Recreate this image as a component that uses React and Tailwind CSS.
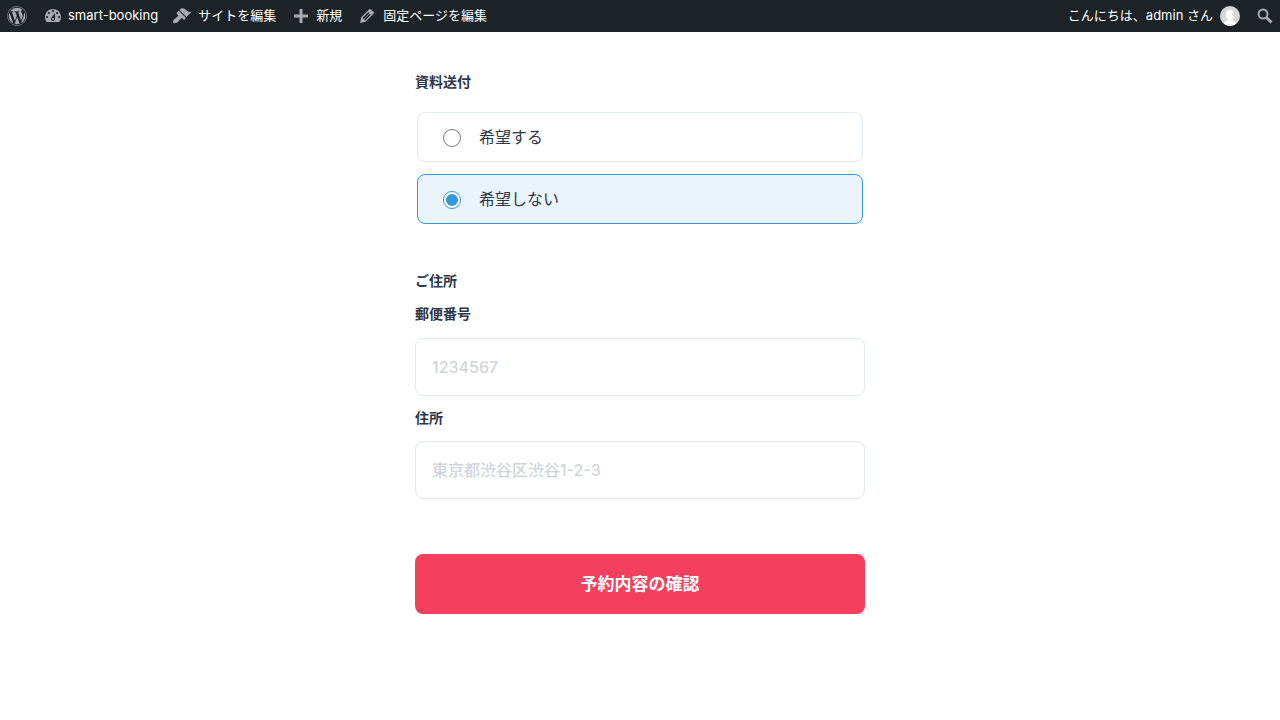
import React, { useState } from 'react';
import { FaWordpress } from 'react-icons/fa';

const jp = { fontFamily: 'Inter, "Noto Sans CJK JP", sans-serif' };

const DashboardIcon = () => (
  <svg viewBox="0 0 20 20" className="w-5 h-5 fill-[#a7aaad]">
    <path fillRule="evenodd" d="M3.76 16h12.48c1.1-1.37 1.76-3.11 1.76-5 0-4.42-3.58-8-8-8s-8 3.58-8 8c0 1.89.66 3.63 1.76 5zM10 4c.55 0 1 .45 1 1s-.45 1-1 1-1-.45-1-1 .45-1 1-1zM6 6c.55 0 1 .45 1 1s-.45 1-1 1-1-.45-1-1 .45-1 1-1zm8 0c.55 0 1 .45 1 1s-.45 1-1 1-1-.45-1-1 .45-1 1-1zm-5.37 5.55L12 7v6c0 1.1-.9 2-2 2s-2-.9-2-2c0-.57.24-1.08.63-1.45zM4 10c.55 0 1 .45 1 1s-.45 1-1 1-1-.45-1-1 .45-1 1-1zm12 0c.55 0 1 .45 1 1s-.45 1-1 1-1-.45-1-1 .45-1 1-1zm-5 3c0-.55-.45-1-1-1s-1 .45-1 1 .45 1 1 1 1-.45 1-1z" />
  </svg>
);

const BrushIcon = () => (
  <svg viewBox="0 0 20 20" className="w-5 h-5 fill-[#a7aaad]">
    <path d="M14.48 11.06L7.41 3.99l1.5-1.5c.5-.56 2.3-.47 3.51.32 1.21.8 1.43 1.28 2.91 2.1 1.18.64 2.45 1.26 4.45.85zm-.71.71L6.7 4.7 4.93 6.47c-.39.39-.39 1.02 0 1.41l1.06 1.06c.39.39.39 1.03 0 1.42-.6.6-1.43 1.11-2.21 1.69-.35.26-.7.53-1.01.84C1.43 13.23.4 15.78 1.5 16.88c1.1 1.1 3.6.07 4.93-1.26.3-.31.58-.65.84-1 .58-.78 1.09-1.6 1.69-2.2.39-.39 1.02-.39 1.41 0l1.06 1.06c.39.39 1.02.39 1.41 0z" />
  </svg>
);

const PlusIcon = () => (
  <svg viewBox="0 0 20 20" className="w-5 h-5 fill-[#a7aaad]">
    <path d="M17 8.5v3h-5.5V17h-3v-5.5H3v-3h5.5V3h3v5.5z" />
  </svg>
);

const PencilIcon = () => (
  <svg viewBox="0 0 20 20" className="w-5 h-5 fill-[#a7aaad]">
    <path d="M13.89 3.39l2.71 2.72c.46.46.42 1.24.03 1.64l-8.01 8.02-5.56 1.16 1.16-5.58s7.6-7.63 7.99-8.03c.39-.39 1.22-.39 1.68.07zm-2.73 2.79l-5.59 5.61 1.11 1.11 5.54-5.65zm-2.97 8.23l5.58-5.6-1.07-1.08-5.59 5.6z" />
  </svg>
);

const SearchIcon = () => (
  <svg viewBox="0 0 20 20" className="w-5 h-5 fill-none stroke-[#a7aaad]">
    <circle cx="8" cy="8" r="4.5" strokeWidth="2" />
    <path d="M11.5 11.5L16.5 16.5" strokeWidth="3" />
  </svg>
);

const BarItem = ({ icon, label, className }) => (
  <div className={`flex items-center h-8 ${className}`}>
    {icon}
    <span>{label}</span>
  </div>
);

const Radio = ({ label, checked, onSelect }) => (
  <label
    className={`flex items-center h-[50px] mx-[2px] pl-[25px] rounded-lg border cursor-pointer ${
      checked ? 'bg-[#ebf3fc] border-[#3498db]' : 'bg-white border-[#e2e8f0]'
    }`}
  >
    <input type="radio" className="sr-only" checked={checked} onChange={onSelect} />
    <span
      className={`flex items-center justify-center w-[18px] h-[18px] mt-[2px] rounded-full border bg-white ${
        checked ? 'border-[#3498db]' : 'border-[#767676]'
      }`}
    >
      {checked && <span className="w-3 h-3 rounded-full bg-[#3498db]" />}
    </span>
    <span className="ml-[18px] text-base text-[#2d3748]">{label}</span>
  </label>
);

export default function App() {
  const [wish, setWish] = useState('no');

  return (
    <div className="min-h-screen bg-white" style={jp}>
      <header className="flex justify-between items-center h-8 bg-[#1d2327] text-white text-[13px]">
        <div className="flex items-center">
          <div className="flex items-center justify-center w-[34px] h-8 mr-[9px]">
            <FaWordpress className="text-[#a7aaad]" size={20} />
          </div>
          <BarItem icon={<DashboardIcon />} label="smart-booking" className="gap-[5px] mr-[14px]" />
          <BarItem icon={<BrushIcon />} label="サイトを編集" className="gap-[6px] mr-[15px]" />
          <BarItem icon={<PlusIcon />} label="新規" className="gap-[5px] mr-[15px]" />
          <BarItem icon={<PencilIcon />} label="固定ページを編集" className="gap-[6px]" />
        </div>
        <div className="flex items-center">
          <span>こんにちは、admin さん</span>
          <span className="relative ml-[7px] w-5 h-5 rounded-full bg-[#d8d8d8] overflow-hidden">
            <span className="absolute left-[6px] top-[4px] w-2 h-[10px] rounded-full bg-white" />
            <span className="absolute left-[3px] top-[14px] w-[14px] h-3 rounded-full bg-white" />
          </span>
          <div className="flex items-center justify-center w-5 h-8 ml-[15px] mr-[5px]">
            <SearchIcon />
          </div>
        </div>
      </header>

      <main className="w-[450px] mx-auto pt-10">
        <h2 className="text-sm leading-5 font-semibold text-[#2d3748]">資料送付</h2>
        <div className="flex flex-col gap-3 mt-5">
          <Radio label="希望する" checked={wish === 'yes'} onSelect={() => setWish('yes')} />
          <Radio label="希望しない" checked={wish === 'no'} onSelect={() => setWish('no')} />
        </div>

        <h2 className="mt-[47px] text-sm leading-5 font-semibold text-[#2d3748]">ご住所</h2>
        <label className="block mt-[13px] text-sm leading-5 font-semibold text-[#2d3748]">郵便番号</label>
        <input
          className="block w-full h-[58px] mt-[14px] px-4 rounded-lg border border-[#e2e8f0] text-base font-medium outline-none placeholder:text-[#d1d5db]"
          placeholder="1234567"
        />
        <label className="block mt-3 text-sm leading-5 font-semibold text-[#2d3748]">住所</label>
        <input
          className="block w-full h-[58px] mt-[13px] px-4 rounded-lg border border-[#e2e8f0] text-base font-medium outline-none placeholder:text-[#d1d5db]"
          placeholder="東京都渋谷区渋谷1-2-3"
        />

        <button className="block w-full h-[60px] mt-[55px] pt-[2px] rounded-lg bg-[#f43f5e] text-white text-[17px] font-bold">
          予約内容の確認
        </button>
      </main>
    </div>
  );
}
